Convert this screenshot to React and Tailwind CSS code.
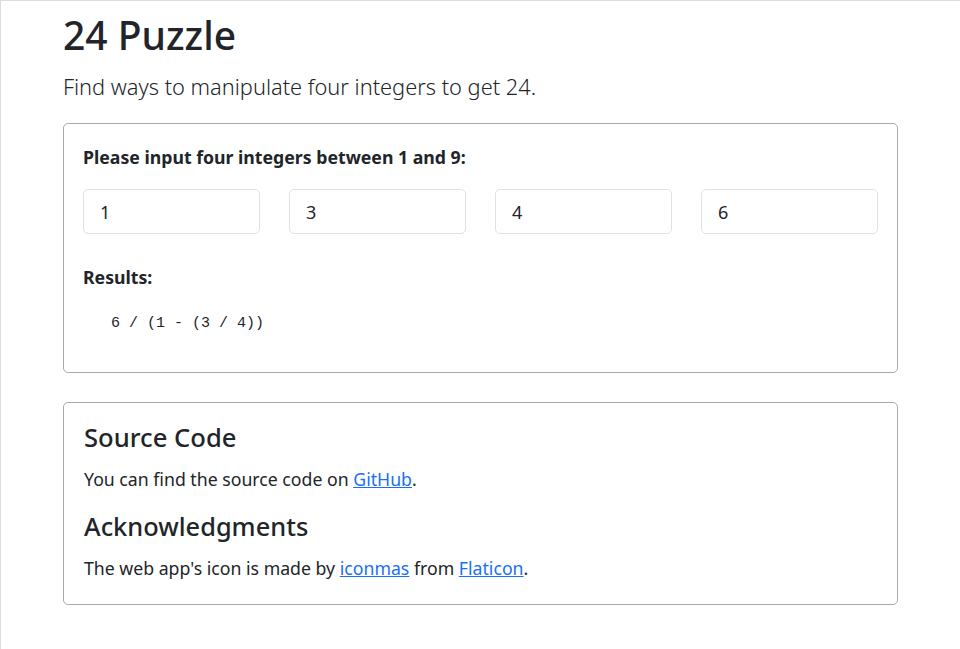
import { useState } from "react";

const solve = () => ["6 / (1 - (3 / 4))"];

const App = () => {
  const [nums, setNums] = useState(["1", "3", "4", "6"]);
  const results = solve(nums);

  return (
    <div className="min-h-[649px] bg-white border-l border-t border-[#dcdcdc] text-[#212529] font-['Noto_Sans',sans-serif]">
      <div className="w-[835px] mx-auto pt-[10px] pb-10">
        <h1 className="text-[39px] leading-[48px] font-medium">24 Puzzle</h1>
        <p className="mt-[13px] text-[21.8px] leading-[30px] font-light">
          Find ways to manipulate four integers to get 24.
        </p>

        {/* INPUT CARD */}
        <div className="mt-[21px] border border-[#a6abb0] rounded-[5px] px-[19px] pt-[21px] pb-[37px]">
          <p className="text-[17.7px] leading-6 font-bold">
            Please input four integers between 1 and 9:
          </p>

          <div className="grid grid-cols-4 gap-[29px] mt-[20px]">
            {nums.map((n, i) => (
              <input
                key={i}
                value={n}
                onChange={(e) => {
                  const next = [...nums];
                  next[i] = e.target.value;
                  setNums(next);
                }}
                className="h-[45px] w-full border border-[#dee2e6] rounded-[5px] px-4 text-[18px] text-[#212529] outline-none"
              />
            ))}
          </div>

          <p className="mt-[31px] text-[17.7px] leading-6 font-bold">Results:</p>
          <div className="mt-[24px] pl-7">
            {results.map((r, i) => (
              <pre key={i} className="font-['Liberation_Mono',monospace] text-[15px] leading-[22px]">
                {r}
              </pre>
            ))}
          </div>
        </div>

        {/* INFO CARD */}
        <div className="mt-[29px] border border-[#a6abb0] rounded-[5px] px-5 pt-5 pb-6">
          <h3 className="text-[25.6px] leading-[29px] font-medium">Source Code</h3>
          <p className="mt-[15px] text-[17.7px] leading-6">
            You can find the source code on{" "}
            <a href="#" className="text-[#1a6ff5] underline">GitHub</a>.
          </p>
          <h3 className="mt-[21px] text-[25.4px] leading-[29px] font-medium">Acknowledgments</h3>
          <p className="mt-[15px] text-[17.7px] leading-6">
            The web app's icon is made by{" "}
            <a href="#" className="text-[#1a6ff5] underline">iconmas</a> from{" "}
            <a href="#" className="text-[#1a6ff5] underline">Flaticon</a>.
          </p>
        </div>
      </div>
    </div>
  );
};

export default App;
